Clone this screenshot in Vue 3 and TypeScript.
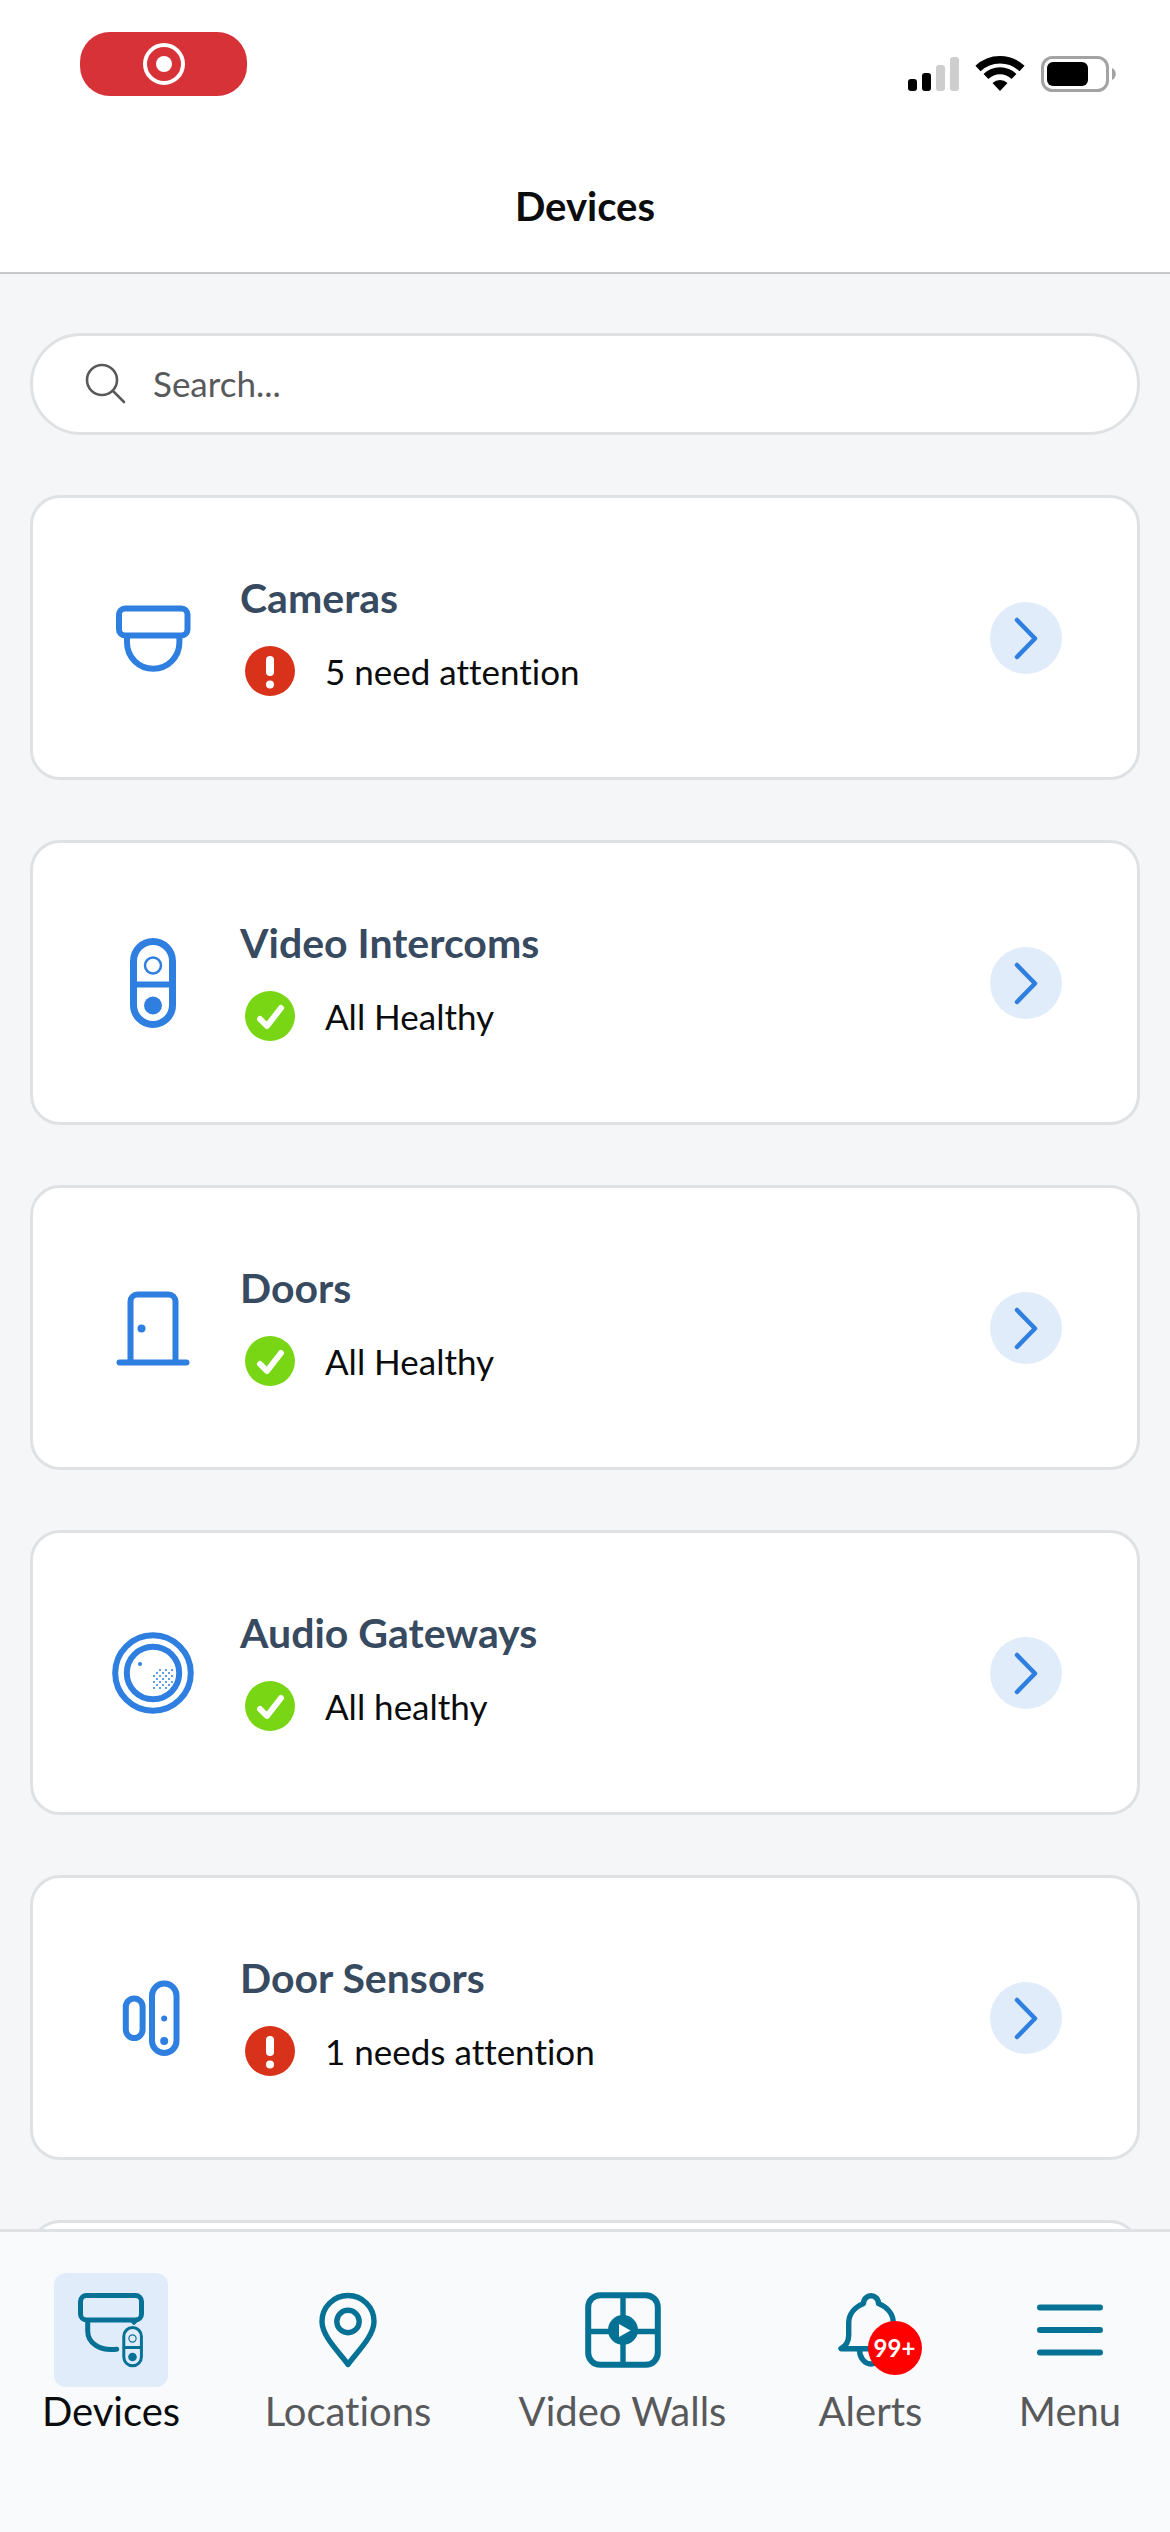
<script setup lang="ts">
import { ref } from 'vue'

type DeviceIcon = 'camera' | 'intercom' | 'door' | 'audio' | 'sensor'
type TabIcon = 'devices' | 'locations' | 'walls' | 'alerts' | 'menu'

interface DeviceGroup {
  id: DeviceIcon
  name: string
  status: string
  healthy: boolean
}

interface Tab {
  id: TabIcon
  label: string
  badge?: string
}

const query = ref('')
const activeTab = ref<TabIcon>('devices')

const groups: DeviceGroup[] = [
  { id: 'camera', name: 'Cameras', status: '5 need attention', healthy: false },
  { id: 'intercom', name: 'Video Intercoms', status: 'All Healthy', healthy: true },
  { id: 'door', name: 'Doors', status: 'All Healthy', healthy: true },
  { id: 'audio', name: 'Audio Gateways', status: 'All healthy', healthy: true },
  { id: 'sensor', name: 'Door Sensors', status: '1 needs attention', healthy: false },
]

const tabs: Tab[] = [
  { id: 'devices', label: 'Devices' },
  { id: 'locations', label: 'Locations' },
  { id: 'walls', label: 'Video Walls' },
  { id: 'alerts', label: 'Alerts', badge: '99+' },
  { id: 'menu', label: 'Menu' },
]

// Speaker grille of the audio gateway: a checkerboard with its top-left corner left out
const grille: { x: number; y: number }[] = []
for (let row = 0; row < 7; row++) {
  for (let col = 0; col < 7; col++) {
    if ((row + col) % 2 === 0 && row + col > 1) {
      grille.push({ x: 46 + col * 3, y: 42 + row * 3 })
    }
  }
}
</script>

<template>
  <div class="app">
    <header class="header">
      <div class="status-bar">
        <span class="recording" role="img" aria-label="Screen recording">
          <svg width="44" height="44" viewBox="0 0 44 44" fill="none">
            <circle cx="22" cy="22" r="19" stroke="#fff" stroke-width="4" />
            <circle cx="22" cy="22" r="8" fill="#fff" />
          </svg>
        </span>
        <svg class="signals" width="208" height="40" viewBox="0 0 208 40" fill="none" aria-hidden="true">
          <rect x="0" y="25" width="9" height="12" rx="3" fill="#000" />
          <rect x="14" y="19" width="9" height="18" rx="3" fill="#000" />
          <rect x="28" y="11" width="9" height="26" rx="3" fill="#cececf" />
          <rect x="42" y="3" width="9" height="34" rx="3" fill="#cececf" />
          <path d="M70 14.5A32 32 0 0 1 114 14.5" stroke="#000" stroke-width="7.5" />
          <path d="M78 22.5A20 20 0 0 1 106 22.5" stroke="#000" stroke-width="7" />
          <path d="M92 37l-7.500-8a11 11 0 0 1 15 0z" fill="#000" />
          <rect x="134.5" y="3.5" width="65" height="33" rx="10" stroke="#a3a3a4" stroke-width="3" />
          <rect x="139" y="8" width="41" height="24" rx="6" fill="#000" />
          <path d="M204 14c5 2 5 10 0 12z" fill="#a3a3a4" />
        </svg>
      </div>
      <h1 class="title">Devices</h1>
    </header>

    <main class="content">
      <label class="search">
        <svg width="42" height="42" viewBox="0 0 42 42" fill="none" aria-hidden="true">
          <circle cx="17" cy="17" r="15" stroke="#58595b" stroke-width="2.6" />
          <path d="M28 28L39 39" stroke="#58595b" stroke-width="2.6" stroke-linecap="round" />
        </svg>
        <input v-model="query" type="search" placeholder="Search..." aria-label="Search devices" />
      </label>

      <a v-for="group in groups" :key="group.id" class="card" :href="'#' + group.id">
        <svg class="device-icon" viewBox="0 0 90 90" stroke-width="6" aria-hidden="true">
          <g v-if="group.id === 'camera'">
            <rect x="11" y="15.5" width="68.5" height="27" rx="6" />
            <path d="M19 43v6.5a26.2 26.2 0 0 0 52.4 0V43" />
          </g>
          <g v-else-if="group.id === 'intercom'">
            <rect x="25.5" y="3.5" width="39" height="83" rx="19.5" stroke-width="7" />
            <path d="M25 46.5h40" />
            <circle cx="45" cy="27.5" r="8" stroke-width="2.5" />
            <circle class="dot" cx="45" cy="67.5" r="9" />
          </g>
          <g v-else-if="group.id === 'door'">
            <path d="M11.5 79.5h67M22.500 79V18.500a7 7 0 0 1 7-7h31a7 7 0 0 1 7 7V79" />
            <circle class="dot" cx="33.5" cy="45.5" r="4" />
          </g>
          <g v-else-if="group.id === 'audio'">
            <circle cx="45" cy="45" r="37.8" />
            <circle cx="45" cy="45" r="26.2" />
            <circle class="dot" cx="32" cy="36" r="2" />
            <circle v-for="(hole, i) in grille" :key="i" class="dot" :cx="hole.x" :cy="hole.y" r="1" />
          </g>
          <g v-else>
            <rect x="17.8" y="25.5" width="16.8" height="39.5" rx="8.4" />
            <rect x="44" y="10.5" width="24.5" height="69.5" rx="12.2" />
            <circle class="dot" cx="56.2" cy="45.5" r="3" />
            <circle class="dot" cx="56.2" cy="68" r="4" />
          </g>
        </svg>

        <span class="info">
          <span class="name">{{ group.name }}</span>
          <span class="status">
            <svg width="50" height="50" viewBox="0 0 50 50" fill="none" aria-hidden="true">
              <template v-if="group.healthy">
                <circle cx="25" cy="25" r="25" fill="#78d614" />
                <path d="M15 28l7 7L36 17" stroke="#fff" stroke-width="6" stroke-linecap="round" stroke-linejoin="round" />
              </template>
              <template v-else>
                <circle cx="25" cy="25" r="25" fill="#d8321a" />
                <path d="M25 14v12" stroke="#fff" stroke-width="8" stroke-linecap="round" />
                <circle cx="25" cy="38.5" r="4" fill="#fff" />
              </template>
            </svg>
            <span>{{ group.status }}</span>
          </span>
        </span>

        <svg class="chevron" width="72" height="72" viewBox="0 0 72 72" fill="none" aria-hidden="true">
          <circle cx="36" cy="36" r="36" fill="#e1ecfa" />
          <path d="M27 18l18 18.500L27 55" stroke="#2e7fe0" stroke-width="4.5" stroke-linecap="round" stroke-linejoin="round" />
        </svg>
      </a>
      <div class="card" aria-hidden="true"></div>
    </main>

    <nav class="tabs" aria-label="Main">
      <button
        v-for="tab in tabs"
        :key="tab.id"
        type="button"
        class="tab"
        :class="{ active: tab.id === activeTab }"
        @click="activeTab = tab.id"
      >
        <span class="tab-icon">
          <svg viewBox="0 0 114 114" stroke-width="5.4" aria-hidden="true">
            <g v-if="tab.id === 'devices'">
              <rect x="26.5" y="22.5" width="61" height="24.5" rx="6" stroke-width="5" />
              <path d="M33.7 48v10c0 12 12 20.500 29 18.2" stroke-width="5" />
              <path d="M77 48h6l-3 3z" stroke-width="2" />
              <rect x="69.8" y="54.5" width="17.6" height="38.3" rx="8.8" stroke-width="3" />
              <path d="M70 74.5h17" stroke-width="3" />
              <circle cx="78.5" cy="65.5" r="3.6" stroke-width="1.2" />
              <circle class="fill" cx="78.5" cy="84" r="4.3" />
            </g>
            <g v-else-if="tab.id === 'locations'">
              <path d="M57 91.5C50 81 31 64 31 48.500a26 26 0 0 1 52 0C83 64 64 81 57 91.500z" />
              <circle cx="57" cy="48.5" r="11.2" />
            </g>
            <g v-else-if="tab.id === 'walls'">
              <rect x="22.2" y="22.2" width="69.6" height="69.6" rx="12" stroke-width="6" />
              <path d="M57 24v66M24 58.500h66" />
              <circle class="fill" cx="57" cy="57" r="15" />
              <path class="play" d="M53 51v13l11.500-6.500z" />
            </g>
            <g v-else-if="tab.id === 'alerts'">
              <path
                d="M27 75.700H87C81 71 79.300 68 79.300 62V50C79.300 41 73 34 64.500 30.500C64.500 26 61 22.800 57 22.800S49.500 26 49.500 30.500C41 34 34.700 41 34.700 50V62C34.700 68 32 73 27 75.700z"
              />
              <path d="M45.5 77a11.500 14 0 0 0 23 0" />
            </g>
            <path v-else d="M27 34.500h60M27 57h60M27 79.500h60" stroke-width="6" />
          </svg>
          <span v-if="tab.badge" class="badge">{{ tab.badge }}</span>
        </span>
        <span class="tab-label">{{ tab.label }}</span>
      </button>
    </nav>
  </div>
</template>

<style>
body {
  margin: 0;
}
</style>

<style scoped>
.app {
  display: flex;
  flex-direction: column;
  height: 100vh;
  overflow: hidden;
  background: #f4f6f8;
  color: #0b0c0d;
  font-family: Lato, 'Noto Sans', sans-serif;
  font-size: 35px;
  font-variant-ligatures: none;
}

.app *,
.app {
  box-sizing: border-box;
}

.header {
  flex: none;
  padding-bottom: 42px;
  border-bottom: 2px solid #c6c9cc;
  background: #fff;
}

.status-bar {
  display: flex;
  justify-content: space-between;
  align-items: flex-start;
  padding: 32px 54px 0 80px;
}

.recording {
  display: flex;
  align-items: center;
  justify-content: center;
  width: 167px;
  height: 64px;
  border-radius: 30px;
  background: #d73237;
}

.signals {
  margin-top: 22px;
}

.title {
  margin: 86px 0 0;
  font-size: 40px;
  line-height: 48px;
  font-weight: 700;
  text-align: center;
}

.content {
  display: flex;
  flex: 1;
  flex-direction: column;
  gap: 60px;
  min-height: 0;
  overflow: hidden;
  padding: 59px 30px 0;
}

.search {
  display: flex;
  flex: none;
  align-items: center;
  gap: 26px;
  height: 102px;
  padding: 0 52px;
  border: 3px solid #dfe2e5;
  border-radius: 51px;
  background: #fff;
}

.search input {
  flex: 1;
  min-width: 0;
  padding: 0 0 2px;
  border: 0;
  outline: 0;
  background: none;
  color: #0b0c0d;
  font: inherit;
  line-height: 48px;
}

.search input::placeholder {
  color: #58595b;
  opacity: 1;
}

.card {
  display: flex;
  flex: none;
  align-items: center;
  min-height: 285px;
  padding: 0 75px;
  border: 3px solid #dfe2e5;
  border-radius: 30px;
  background: #fff;
  color: inherit;
  text-decoration: none;
}

.device-icon {
  width: 90px;
  height: 90px;
  margin-right: 42px;
  fill: none;
  stroke: #2e7fe0;
  stroke-linecap: round;
}

.device-icon .dot {
  fill: #2e7fe0;
  stroke: none;
}

.info {
  display: flex;
  flex: 1;
  flex-direction: column;
  gap: 24px;
  padding-bottom: 5px;
}

.name {
  color: #374a5f;
  font-size: 41px;
  line-height: 48px;
  font-weight: 700;
}

.status {
  display: flex;
  align-items: center;
  gap: 30px;
  padding-left: 5px;
  line-height: 48px;
}

.chevron {
  flex: none;
}

.tabs {
  display: grid;
  flex: none;
  grid-template-columns: 222fr 252fr 297fr 199fr 200fr;
  padding: 41px 0 84px;
  border-top: 3px solid #dfe2e5;
  background: #f8fafc;
}

.tab {
  display: flex;
  flex-direction: column;
  align-items: center;
  padding: 0;
  border: 0;
  background: none;
  color: #58595b;
  font: inherit;
  font-size: 40px;
  line-height: 48px;
}

.tab.active {
  color: #0b0c0d;
}

.tab-icon {
  position: relative;
  width: 114px;
  height: 114px;
  border-radius: 12px;
}

.tab.active .tab-icon {
  background: #e1ecfa;
}

.tab-icon svg {
  display: block;
  fill: none;
  stroke: #057195;
  stroke-linecap: round;
  stroke-linejoin: round;
}

.tab-icon .fill {
  fill: #057195;
  stroke: none;
}

.tab-icon .play {
  fill: #f8fafc;
  stroke: none;
}

.badge {
  position: absolute;
  top: 48px;
  left: 54px;
  width: 54px;
  height: 54px;
  border-radius: 50%;
  background: #f00;
  color: #fff;
  font-size: 24px;
  line-height: 54px;
  font-weight: 700;
  text-align: center;
}

.tab-label {
  padding-bottom: 13px;
}
</style>
